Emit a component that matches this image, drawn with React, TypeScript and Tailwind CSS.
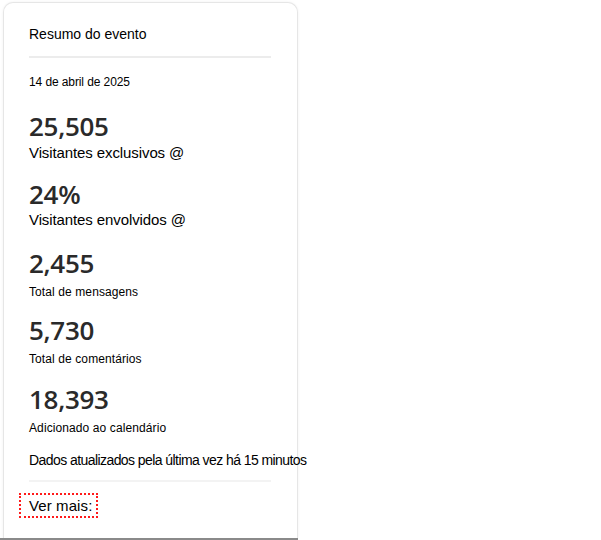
export default function App() {
  const stats = [
    { value: '25,505', label: 'Visitantes exclusivos @', big: true, mt: 'mt-[20px]', lmt: 'mt-px' },
    { value: '24%', label: 'Visitantes envolvidos @', big: true, mt: 'mt-[15px]', lmt: 'mt-0' },
    { value: '2,455', label: 'Total de mensagens', big: false, mt: 'mt-[17px]', lmt: 'mt-[5px]' },
    { value: '5,730', label: 'Total de comentários', big: false, mt: 'mt-[14px]', lmt: 'mt-[5px]' },
    { value: '18,393', label: 'Adicionado ao calendário', big: false, mt: 'mt-[16px]', lmt: 'mt-[5px]' },
  ];

  return (
    <div className="w-[601px] h-[540px] bg-white font-['Liberation_Sans',Arial,sans-serif] text-black overflow-hidden">
      <div className="w-[298px] h-[540px] flex flex-col">
        {/* Card */}
        <div className="ml-[3px] mt-[2px] w-[295px] h-[536px] bg-white border border-[#e6e6e6] border-b-0 rounded-t-[10px] shadow-[0_0_3px_rgba(0,0,0,0.06)] pt-[21px] pl-[25px] pr-[26px]">
          <h2 className="text-[14px] leading-[20px]">Resumo do evento</h2>
          <div className="mt-[12px] h-[2px] bg-[#ececec]" />
          <p className="mt-[16px] text-[12px] leading-[16px] tracking-[-0.1px]">14 de abril de 2025</p>

          {stats.map(s => (
            <div key={s.label}>
              <div className={`${s.mt} text-[26px] leading-[32px] font-semibold text-[#2a2a2a] font-['Open_Sans',sans-serif] tracking-[-0.3px]`}>
                {s.value}
              </div>
              <div
                className={`${s.lmt} ${s.big ? 'text-[15px] leading-[20px] tracking-[-0.1px]' : 'text-[12px] leading-[16px] tracking-[0.1px]'}`}
              >
                {s.label}
              </div>
            </div>
          ))}

          <p className="mt-[14px] text-[14px] leading-[20px] tracking-[-0.57px] whitespace-nowrap">
            Dados atualizados pela última vez há 15 minutos
          </p>
          <div className="mt-[10px] h-[2px] bg-[#f3f3f3]" />
          <div className="mt-[11px] -ml-[10px] w-[79px] h-[25px] border-2 border-dotted border-[#ff1a1a] flex items-center pl-[8px] text-[15px] leading-[20px] tracking-[0.1px]">
            Ver mais:
          </div>
        </div>
        <div className="h-[2px] bg-[#8a8a8a]" />
      </div>
    </div>
  );
}
